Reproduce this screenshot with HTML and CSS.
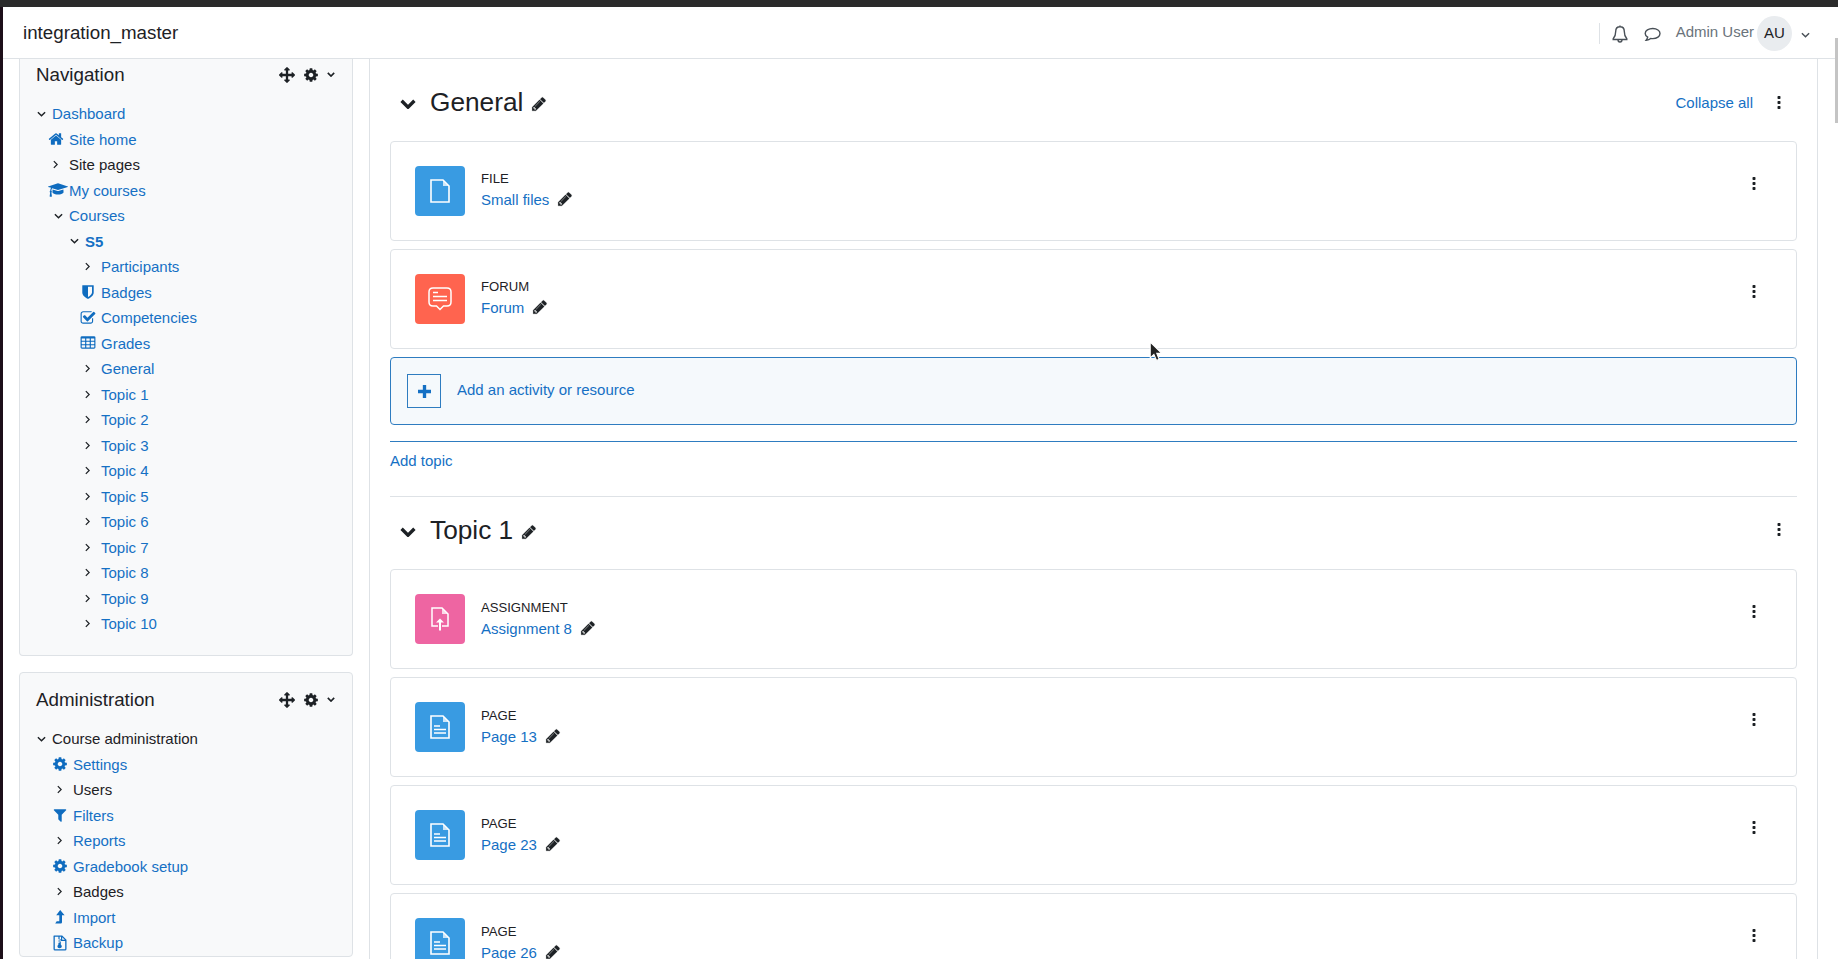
FILE: index.html
```html
<!DOCTYPE html>
<html lang="en">
<head>
<meta charset="utf-8">
<title>integration_master</title>
<link rel="stylesheet" href="styles.css">
</head>
<body>
<svg class="sprite" aria-hidden="true">
  <symbol id="i-pencil" viewBox="0 0 1792 1792"><path d="M491 1536l91-91-235-235-91 91v107h128v128h107zm523-928q0-22-22-22-10 0-17 7l-542 542q-7 7-7 17 0 22 22 22 10 0 17-7l542-542q7-7 7-17zm-54-192l416 416-832 832h-416v-416zm683 96q0 53-37 90l-166 166-416-416 166-165q36-38 90-38 53 0 91 38l235 234q37 39 37 91z"/></symbol>
  <symbol id="i-cog" viewBox="0 0 1792 1792"><path d="M1152 896q0-106-75-181t-181-75-181 75-75 181 75 181 181 75 181-75 75-181zm512-109v222q0 12-8 23t-20 13l-185 28q-19 54-39 91 35 50 107 138 10 12 10 25t-9 23q-27 37-99 108t-94 71q-12 0-26-9l-138-108q-44 23-91 38-16 136-29 186-7 28-36 28h-222q-14 0-24.5-8.5t-11.5-21.5l-28-184q-49-16-90-37l-141 107q-10 9-25 9-14 0-25-11-126-114-165-168-7-10-7-23 0-12 8-23 15-21 51-66.5t54-70.5q-27-50-41-99l-183-27q-13-2-21-12.5t-8-23.5v-222q0-12 8-23t19-13l186-28q14-46 39-92-40-57-107-138-10-12-10-24 0-10 9-23 26-36 98.5-107.5t94.5-71.5q13 0 26 10l138 107q44-23 91-38 16-136 29-186 7-28 36-28h222q14 0 24.5 8.5t11.5 21.5l28 184q49 16 90 37l142-107q9-9 24-9 13 0 25 10 129 119 165 170 7 8 7 22 0 12-8 23-15 21-51 66.5t-54 70.5q26 50 41 98l183 28q13 2 21 12.5t8 23.5z"/></symbol>
  <symbol id="i-move" viewBox="0 0 1792 1792"><path d="M1792 896q0 26-19 45l-256 256q-19 19-45 19t-45-19-19-45v-128h-384v384h128q26 0 45 19t19 45-19 45l-256 256q-19 19-45 19t-45-19l-256-256q-19-19-19-45t19-45 45-19h128v-384h-384v128q0 26-19 45t-45 19-45-19l-256-256q-19-19-19-45t19-45l256-256q19-19 45-19t45 19 19 45v128h384v-384h-128q-26 0-45-19t-19-45 19-45l256-256q19-19 45-19t45 19l256 256q19 19 19 45t-19 45-45 19h-128v384h384v-128q0-26 19-45t45-19 45 19l256 256q19 19 19 45z"/></symbol>
  <symbol id="i-home" viewBox="0 0 1792 1792"><path d="M1472 992v480q0 26-19 45t-45 19h-384v-384h-256v384h-384q-26 0-45-19t-19-45v-480q0-1 .5-3t.5-3l575-474 575 474q1 2 1 6zm223-69l-62 74q-8 9-21 11h-3q-13 0-21-7l-692-577-692 577q-12 8-24 7-13-2-21-11l-62-74q-8-10-7-23.5t11-21.5l719-599q32-26 76-26t76 26l244 204v-195q0-14 9-23t23-9h192q14 0 23 9t9 23v408l219 182q10 8 11 21.5t-7 23.5z"/></symbol>
  <symbol id="i-cap" viewBox="0 0 2304 1792"><path d="M1774 836l18 316q4 69-82 128t-235 93.5-323 34.5-323-34.5-235-93.5-82-128l18-316 574 181q22 7 48 7t48-7zm530-324q0 23-22 31l-1120 352q-4 1-10 1t-10-1l-652-206q-43 34-71 111.5t-34 178.5q63 36 63 109 0 69-58 107l58 433q2 14-8 25-9 11-24 11h-192q-15 0-24-11-10-11-8-25l58-433q-58-38-58-107 0-73 65-111 11-207 98-330l-333-104q-22-8-22-31t22-31l1120-352q4-1 10-1t10 1l1120 352q22 8 22 31z"/></symbol>
  <symbol id="i-shield" viewBox="0 0 1792 1792"><path d="M1344 960v-640h-448v1137q119-63 213-137 235-184 235-360zm192-768v768q0 86-33.5 170.5t-83 150-118 127.5-126.5 103-121 77.5-89.5 49.5-42.5 20q-12 6-26 6t-26-6q-16-7-42.5-20t-89.5-49.5-121-77.5-126.5-103-118-127.5-83-150-33.5-170.5v-768q0-26 19-45t45-19h1152q26 0 45 19t19 45z"/></symbol>
  <symbol id="i-check" viewBox="0 0 1792 1792"><path d="M1472 930v318q0 119-84.5 203.5t-203.5 84.5h-832q-119 0-203.5-84.5t-84.5-203.5v-832q0-119 84.5-203.5t203.5-84.5h832q63 0 117 25 15 7 18 23 3 17-9 29l-49 49q-10 10-23 10-3 0-9-2-23-6-45-6h-832q-66 0-113 47t-47 113v832q0 66 47 113t113 47h832q66 0 113-47t47-113v-254q0-13 9-22l64-64q10-10 23-10 6 0 12 3 20 8 20 29zm231-489l-814 814q-24 24-57 24t-57-24l-430-430q-24-24-24-57t24-57l110-110q24-24 57-24t57 24l263 263 647-647q24-24 57-24t57 24l110 110q24 24 24 57t-24 57z"/></symbol>
  <symbol id="i-table" viewBox="0 0 1792 1792"><path d="M576 1376v-192q0-14-9-23t-23-9h-320q-14 0-23 9t-9 23v192q0 14 9 23t23 9h320q14 0 23-9t9-23zm0-384v-192q0-14-9-23t-23-9h-320q-14 0-23 9t-9 23v192q0 14 9 23t23 9h320q14 0 23-9t9-23zm512 384v-192q0-14-9-23t-23-9h-320q-14 0-23 9t-9 23v192q0 14 9 23t23 9h320q14 0 23-9t9-23zm-512-768v-192q0-14-9-23t-23-9h-320q-14 0-23 9t-9 23v192q0 14 9 23t23 9h320q14 0 23-9t9-23zm512 384v-192q0-14-9-23t-23-9h-320q-14 0-23 9t-9 23v192q0 14 9 23t23 9h320q14 0 23-9t9-23zm512 384v-192q0-14-9-23t-23-9h-320q-14 0-23 9t-9 23v192q0 14 9 23t23 9h320q14 0 23-9t9-23zm-512-768v-192q0-14-9-23t-23-9h-320q-14 0-23 9t-9 23v192q0 14 9 23t23 9h320q14 0 23-9t9-23zm512 384v-192q0-14-9-23t-23-9h-320q-14 0-23 9t-9 23v192q0 14 9 23t23 9h320q14 0 23-9t9-23zm0-384v-192q0-14-9-23t-23-9h-320q-14 0-23 9t-9 23v192q0 14 9 23t23 9h320q14 0 23-9t9-23zm128-320v1088q0 66-47 113t-113 47h-1344q-66 0-113-47t-47-113v-1088q0-66 47-113t113-47h1344q66 0 113 47t47 113z"/></symbol>
  <symbol id="i-filter" viewBox="0 0 1792 1792"><path d="M1595 295q17 41-14 70l-493 493v742q0 42-39 59-13 5-25 5-27 0-45-19l-256-256q-19-19-19-45v-486l-493-493q-31-29-14-70 17-39 59-39h1280q42 0 59 39z"/></symbol>
  <symbol id="i-levelup" viewBox="0 0 16 16"><path d="M8.2 1 12.6 6.2H10V13.2q0 1.3-1.3 1.3H3.2l1.5-2.2H7.3V6.2H4.2Z"/></symbol>
  <symbol id="i-zip" viewBox="0 0 16 16"><path fill-rule="evenodd" d="M2 .5h8.2L14.5 4.8V14q0 1.5-1.5 1.5H3Q1.500 15.500 1.500 14V1Q1.500 .5 2 .5ZM2.800 1.800V14.200H13.200V6H9V1.800H7.600V3H6.400V1.800ZM10.200 2.200V4.800H12.800ZM6.400 3H7.600V4.200H6.400ZM7.600 4.200H8.800V5.400H7.600ZM6.400 5.400H7.600V6.600H6.400ZM7.600 6.600H8.800V7.800H7.600ZM6.400 7.800H8.800V9.600Q9.800 10.400 9.800 11.500 9.800 13.300 7.600 13.300 5.400 13.300 5.400 11.500 5.400 10.400 6.400 9.600Z"/></symbol>
  <symbol id="i-dots" viewBox="0 0 4 14"><rect x=".4" width="3.200" height="3.200" rx=".8"/><rect x=".4" y="5.400" width="3.200" height="3.200" rx=".8"/><rect x=".4" y="10.800" width="3.200" height="3.200" rx=".8"/></symbol>
  <symbol id="i-down" viewBox="0 0 10 6"><path d="M1 1 5 5 9 1" fill="none" stroke="currentColor"/></symbol>
  <symbol id="i-right" viewBox="0 0 6 10"><path d="M1 1 5 5 1 9" fill="none" stroke="currentColor" stroke-width="1.500"/></symbol>
  <symbol id="i-file" viewBox="0 0 20 24"><path d="M1 1H13L19 7V23H1Z" fill="none" stroke="#fff" stroke-width="1.600"/><path d="M13 1.500V7H18.500Z" fill="#fff" fill-opacity=".75"/></symbol>
  <symbol id="i-page" viewBox="0 0 20 24"><path d="M1 1H13L19 7V23H1Z" fill="none" stroke="#fff" stroke-width="1.600"/><path d="M13 1.500V7H18.500Z" fill="#fff" fill-opacity=".75"/><path d="M4 11H10M4 14.500H16M4 18H16" stroke="#fff" stroke-width="1.500"/></symbol>
  <symbol id="i-forum" viewBox="0 0 24 24"><path d="M5 1H19Q23 1 23 5V15Q23 19 19 19H15.500L12 22.500 8.500 19H5Q1 19 1 15V5Q1 1 5 1Z" fill="none" stroke="#fff" stroke-width="1.500"/><path d="M5 5.500H10M5 9.500H19M5 13.500H19" stroke="#fff" stroke-width="1.500"/></symbol>
  <symbol id="i-assign" viewBox="0 0 18 24"><path d="M7 19H1V1H11L17 7V19H11" fill="none" stroke="#fff" stroke-width="1.500"/><path d="M11 1.500V7H16.500Z" fill="#fff" fill-opacity=".75"/><path d="M9 11.500 13 15.500H10V23.500H8V15.500H5Z" fill="#fff"/></symbol>
</svg>

<div class="window-top"></div>
<div class="window">
  <header class="navbar">
    <span class="brand">integration_master</span>
    <div class="user-tools">
      <span class="divider"></span>
      <svg class="tool-bell" viewBox="0 0 16 18" aria-hidden="true"><path d="M8 1.800C5.200 1.800 3.700 3.800 3.700 6.500 3.700 10.500 2.800 12.100 1.200 13.800V14.500H14.800V13.800C13.200 12.100 12.300 10.500 12.300 6.500 12.300 3.800 10.800 1.800 8 1.800ZM8 .5V1.800M6 14.800C6 16.300 6.900 17 8 17S10 16.300 10 14.800" fill="none" stroke="currentColor" stroke-width="1.400"/></svg>
      <svg class="tool-chat" viewBox="0 0 17 15" aria-hidden="true"><path d="M8.800 1.500C4.600 1.500 1.200 3.700 1.200 6.500 1.200 8 2.100 9.300 3.700 10.200 3.500 11.400 2.900 12.300 2.200 13.200 3.900 13 5.600 12.400 6.700 11.400 7.400 11.500 8.100 11.600 8.800 11.600 13 11.600 16 9.300 16 6.500S13 1.500 8.800 1.500Z" fill="none" stroke="currentColor" stroke-width="1.400"/></svg>
      <span class="user-name">Admin User</span>
      <span class="avatar">AU</span>
      <svg class="user-caret" aria-hidden="true"><use href="#i-down"/></svg>
    </div>
  </header>

  <div class="page">
    <aside class="sidebar">
      <section class="block block-first">
        <div class="block-head">
          <h5 class="block-title">Navigation</h5>
          <svg class="ctl-move"><use href="#i-move"/></svg>
          <svg class="ctl-cog"><use href="#i-cog"/></svg>
          <svg class="ctl-caret"><use href="#i-down"/></svg>
        </div>
        <ul class="tree">
          <li><div class="row"><span class="cell"><svg class="chev-down"><use href="#i-down"/></svg></span><a href="#">Dashboard</a></div>
            <ul>
              <li><div class="row"><span class="cell"><svg class="nav-ico"><use href="#i-home"/></svg></span><a href="#">Site home</a></div></li>
              <li><div class="row"><span class="cell"><svg class="chev-right"><use href="#i-right"/></svg></span><span>Site pages</span></div></li>
              <li><div class="row"><span class="cell"><svg class="nav-cap"><use href="#i-cap"/></svg></span><a href="#">My courses</a></div></li>
              <li><div class="row"><span class="cell"><svg class="chev-down"><use href="#i-down"/></svg></span><a href="#">Courses</a></div>
                <ul>
                  <li><div class="row"><span class="cell"><svg class="chev-down"><use href="#i-down"/></svg></span><a href="#" class="strong">S5</a></div>
                    <ul>
                      <li><div class="row"><span class="cell"><svg class="chev-right"><use href="#i-right"/></svg></span><a href="#">Participants</a></div></li>
                      <li><div class="row"><span class="cell"><svg class="nav-ico"><use href="#i-shield"/></svg></span><a href="#">Badges</a></div></li>
                      <li><div class="row"><span class="cell"><svg class="nav-ico"><use href="#i-check"/></svg></span><a href="#">Competencies</a></div></li>
                      <li><div class="row"><span class="cell"><svg class="nav-ico"><use href="#i-table"/></svg></span><a href="#">Grades</a></div></li>
                      <li><div class="row"><span class="cell"><svg class="chev-right"><use href="#i-right"/></svg></span><a href="#">General</a></div></li>
                      <li><div class="row"><span class="cell"><svg class="chev-right"><use href="#i-right"/></svg></span><a href="#">Topic 1</a></div></li>
                      <li><div class="row"><span class="cell"><svg class="chev-right"><use href="#i-right"/></svg></span><a href="#">Topic 2</a></div></li>
                      <li><div class="row"><span class="cell"><svg class="chev-right"><use href="#i-right"/></svg></span><a href="#">Topic 3</a></div></li>
                      <li><div class="row"><span class="cell"><svg class="chev-right"><use href="#i-right"/></svg></span><a href="#">Topic 4</a></div></li>
                      <li><div class="row"><span class="cell"><svg class="chev-right"><use href="#i-right"/></svg></span><a href="#">Topic 5</a></div></li>
                      <li><div class="row"><span class="cell"><svg class="chev-right"><use href="#i-right"/></svg></span><a href="#">Topic 6</a></div></li>
                      <li><div class="row"><span class="cell"><svg class="chev-right"><use href="#i-right"/></svg></span><a href="#">Topic 7</a></div></li>
                      <li><div class="row"><span class="cell"><svg class="chev-right"><use href="#i-right"/></svg></span><a href="#">Topic 8</a></div></li>
                      <li><div class="row"><span class="cell"><svg class="chev-right"><use href="#i-right"/></svg></span><a href="#">Topic 9</a></div></li>
                      <li><div class="row"><span class="cell"><svg class="chev-right"><use href="#i-right"/></svg></span><a href="#">Topic 10</a></div></li>
                    </ul>
                  </li>
                </ul>
              </li>
            </ul>
          </li>
        </ul>
      </section>

      <section class="block">
        <div class="block-head">
          <h5 class="block-title">Administration</h5>
          <svg class="ctl-move"><use href="#i-move"/></svg>
          <svg class="ctl-cog"><use href="#i-cog"/></svg>
          <svg class="ctl-caret"><use href="#i-down"/></svg>
        </div>
        <ul class="tree tree-admin">
          <li><div class="row"><span class="cell"><svg class="chev-down"><use href="#i-down"/></svg></span><span>Course administration</span></div>
            <ul>
              <li><div class="row"><span class="cell"><svg class="nav-ico"><use href="#i-cog"/></svg></span><a href="#">Settings</a></div></li>
              <li><div class="row"><span class="cell"><svg class="chev-right"><use href="#i-right"/></svg></span><span>Users</span></div></li>
              <li><div class="row"><span class="cell"><svg class="nav-ico"><use href="#i-filter"/></svg></span><a href="#">Filters</a></div></li>
              <li><div class="row"><span class="cell"><svg class="chev-right"><use href="#i-right"/></svg></span><a href="#">Reports</a></div></li>
              <li><div class="row"><span class="cell"><svg class="nav-ico"><use href="#i-cog"/></svg></span><a href="#">Gradebook setup</a></div></li>
              <li><div class="row"><span class="cell"><svg class="chev-right"><use href="#i-right"/></svg></span><span>Badges</span></div></li>
              <li><div class="row"><span class="cell"><svg class="nav-ico"><use href="#i-levelup"/></svg></span><a href="#">Import</a></div></li>
              <li><div class="row"><span class="cell"><svg class="nav-ico"><use href="#i-zip"/></svg></span><a href="#">Backup</a></div></li>
            </ul>
          </li>
        </ul>
      </section>
    </aside>

    <main class="content">
      <section class="course-section">
        <div class="section-head">
          <svg class="section-chev"><use href="#i-down"/></svg>
          <h3 class="section-title">General</h3>
          <svg class="title-pencil"><use href="#i-pencil"/></svg>
          <a href="#" class="collapse-all">Collapse all</a>
          <svg class="section-dots"><use href="#i-dots"/></svg>
        </div>
        <article class="card">
          <div class="tile tile-blue"><svg class="tile-doc"><use href="#i-file"/></svg></div>
          <div class="card-body"><span class="card-type">File</span><span class="card-name"><a href="#">Small files</a><svg class="name-pencil"><use href="#i-pencil"/></svg></span></div>
          <svg class="card-dots"><use href="#i-dots"/></svg>
        </article>
        <article class="card">
          <div class="tile tile-red"><svg class="tile-forum"><use href="#i-forum"/></svg></div>
          <div class="card-body"><span class="card-type">Forum</span><span class="card-name"><a href="#">Forum</a><svg class="name-pencil"><use href="#i-pencil"/></svg></span></div>
          <svg class="card-dots"><use href="#i-dots"/></svg>
        </article>
        <a href="#" class="add-box">
          <span class="add-plus"><svg viewBox="0 0 14 14"><path d="M5.200 0H8.800V5.200H14V8.800H8.800V14H5.200V8.800H0V5.200H5.200Z"/></svg></span>
          <span class="add-label">Add an activity or resource</span>
        </a>
        <div class="add-topic"><a href="#">Add topic</a></div>
      </section>

      <section class="course-section section-rule">
        <div class="section-head">
          <svg class="section-chev"><use href="#i-down"/></svg>
          <h3 class="section-title">Topic 1</h3>
          <svg class="title-pencil"><use href="#i-pencil"/></svg>
          <svg class="section-dots section-dots-solo"><use href="#i-dots"/></svg>
        </div>
        <article class="card">
          <div class="tile tile-pink"><svg class="tile-assign"><use href="#i-assign"/></svg></div>
          <div class="card-body"><span class="card-type">Assignment</span><span class="card-name"><a href="#">Assignment 8</a><svg class="name-pencil"><use href="#i-pencil"/></svg></span></div>
          <svg class="card-dots"><use href="#i-dots"/></svg>
        </article>
        <article class="card">
          <div class="tile tile-blue"><svg class="tile-doc"><use href="#i-page"/></svg></div>
          <div class="card-body"><span class="card-type">Page</span><span class="card-name"><a href="#">Page 13</a><svg class="name-pencil"><use href="#i-pencil"/></svg></span></div>
          <svg class="card-dots"><use href="#i-dots"/></svg>
        </article>
        <article class="card">
          <div class="tile tile-blue"><svg class="tile-doc"><use href="#i-page"/></svg></div>
          <div class="card-body"><span class="card-type">Page</span><span class="card-name"><a href="#">Page 23</a><svg class="name-pencil"><use href="#i-pencil"/></svg></span></div>
          <svg class="card-dots"><use href="#i-dots"/></svg>
        </article>
        <article class="card">
          <div class="tile tile-blue"><svg class="tile-doc"><use href="#i-page"/></svg></div>
          <div class="card-body"><span class="card-type">Page</span><span class="card-name"><a href="#">Page 26</a><svg class="name-pencil"><use href="#i-pencil"/></svg></span></div>
          <svg class="card-dots"><use href="#i-dots"/></svg>
        </article>
      </section>
    </main>
  </div>
</div>

<div class="scroll-thumb"></div>
<svg class="cursor" viewBox="0 0 13 20" aria-hidden="true"><path d="M1 1V16L4.500 12.800 7 18.500 9.500 17.400 7.200 11.800H12Z" fill="#222" stroke="#fff" stroke-width="1"/></svg>
</body>
</html>
```
FILE: styles.css
```css
* { box-sizing: border-box; }
html, body { margin: 0; height: 100%; overflow: hidden; }
body {
  position: relative;
  display: flex;
  flex-direction: column;
  background: #fff;
  color: #1d2125;
  font: 15px/22.5px "Liberation Sans", Arial, sans-serif;
}
a { color: #1570c4; text-decoration: none; }
svg { display: block; flex: none; fill: currentColor; }
.sprite { position: absolute; width: 0; height: 0; }

.window-top { height: 7px; flex: none; background: #2b2b2b; }
.window { flex: 1; min-height: 0; margin-left: 3px; box-shadow: -3px 0 0 #1d0f19; display: flex; flex-direction: column; background: #fff; }

.navbar { height: 52px; flex: none; display: flex; align-items: center; padding: 2px 28px 0 20px; border-bottom: 1px solid #dee2e6; }
.brand { font-size: 18.75px; }
.user-tools { margin-left: auto; display: flex; align-items: center; color: #6a737b; }
.divider { width: 1px; height: 21px; background: #dee2e6; margin-right: 12px; }
.tool-bell { width: 16px; height: 18px; color: #495057; margin-right: 16px; }
.tool-chat { width: 17px; height: 15px; color: #495057; margin-right: 15px; margin-top: 2px; }
.user-name { margin-right: 3px; margin-top: -2px; }
.avatar { width: 35px; height: 35px; border-radius: 50%; background: #e9ecef; color: #1d2125; display: flex; align-items: center; justify-content: center; }
.user-caret { width: 9px; height: 6px; margin-left: 9px; margin-top: 2px; color: #495057; stroke-width: 1.6; }

.page { flex: 1; min-height: 0; display: flex; align-items: flex-start; }
.sidebar { width: 350px; flex: none; padding-left: 16px; display: flex; flex-direction: column; }
.block { width: 334px; background: #f8f9fa; border: 1px solid #dee2e6; border-radius: 4px; padding: 11px 0 0; margin-bottom: 16px; }
.block-first { border-top: 0; border-radius: 0 0 4px 4px; padding-top: 0; height: 597px; margin-bottom: 16px; }
.block-head { height: 32px; display: flex; align-items: center; padding-left: 16px; }
.block-title { margin: 0; font-size: 18.75px; font-weight: 400; flex: 1; }
.ctl-move { width: 16px; height: 16px; margin-right: 8px; }
.ctl-cog { width: 16px; height: 16px; margin-right: 8px; }
.ctl-caret { width: 8px; height: 5px; margin-right: 17px; margin-top: -1px; stroke-width: 2; }

.tree, .tree ul { list-style: none; margin: 0; padding: 0; }
.tree { margin: 10px 0 0 12px; }
.tree ul { padding-left: 16px; }
.tree > li > ul { padding-left: 17px; }
.tree-admin > li > ul { padding-left: 21px; }
.row { height: 25.5px; display: flex; align-items: center; line-height: 25.5px; }
.cell { width: 20px; height: 25.5px; flex: none; display: flex; align-items: center; color: #1d2125; }
.chev-down { width: 9px; height: 6px; margin-left: 5px; stroke-width: 1.6; }
.chev-right { width: 5px; height: 9px; margin-left: 4px; }
.nav-ico { width: 16px; height: 16px; margin-left: -1px; color: #0f6cbf; }
.nav-cap { width: 20px; height: 16px; margin-left: -1px; color: #0f6cbf; }
.strong { font-weight: 700; }

.content { flex: 1; min-width: 0; height: 100%; margin-left: 16px; margin-right: 20px; border-left: 1px solid #dee2e6; border-right: 1px solid #dee2e6; padding: 20px 20px 0; overflow: hidden; }
.section-head { height: 46px; display: flex; align-items: center; margin-bottom: 16px; }
.section-chev { width: 16px; height: 10px; margin: 4px 14px 0 10px; stroke-width: 2.1; }
.section-title { margin: 0; font-size: 26.25px; font-weight: 400; line-height: 32px; }
.title-pencil { width: 16px; height: 16px; margin: 4px 0 0 8px; stroke: currentColor; stroke-width: 20; }
.collapse-all { margin-left: auto; margin-right: 24px; margin-top: 2px; }
.section-dots { width: 4px; height: 13px; margin-right: 16px; }
.section-dots-solo { margin-left: auto; }

.card { height: 100px; display: flex; align-items: flex-start; padding: 24px; margin-bottom: 8px; border: 1px solid #dee2e6; border-radius: 4px; background: #fff; }
.tile { width: 50px; height: 50px; flex: none; border-radius: 4px; display: flex; align-items: center; justify-content: center; }
.tile-blue { background: #399be2; }
.tile-red { background: #ff644f; }
.tile-pink { background: #ee65a2; }
.tile-doc { width: 20px; height: 24px; }
.tile-forum { width: 24px; height: 24px; }
.tile-assign { width: 18px; height: 24px; }
.card-body { margin-left: 16px; margin-top: 2px; display: flex; flex-direction: column; }
.section-rule .card-body { margin-top: 3px; }
.card-type { font-size: 13.125px; line-height: 21px; text-transform: uppercase; }
.card-name { display: flex; align-items: center; line-height: 22px; }
.name-pencil { width: 16px; height: 16px; margin: -2px 0 0 8px; stroke: currentColor; stroke-width: 20; }
.card-dots { width: 4px; height: 13px; margin-left: auto; margin-right: 16px; margin-top: 11px; }

.add-box { height: 68px; display: flex; align-items: center; gap: 16px; padding-left: 16px; background: #f5f9fc; border: 1px solid #2e7cc0; border-radius: 4px; }
.add-plus { width: 34px; height: 34px; border: 1px solid #2e7cc0; display: flex; align-items: center; justify-content: center; }
.add-plus svg { width: 13px; height: 13px; }
.add-label { margin-top: -2px; }
.add-topic { margin-top: 16px; border-top: 1px solid #2e7cc0; padding: 8px 0 23px; line-height: 22.5px; }
.section-rule { border-top: 1px solid #dee2e6; padding-top: 10px; }

.scroll-thumb { position: absolute; right: 0; top: 38px; width: 3px; height: 85px; background: #c4c4c4; }
.cursor { position: absolute; left: 1149px; top: 341px; width: 14px; height: 21px; }
```
